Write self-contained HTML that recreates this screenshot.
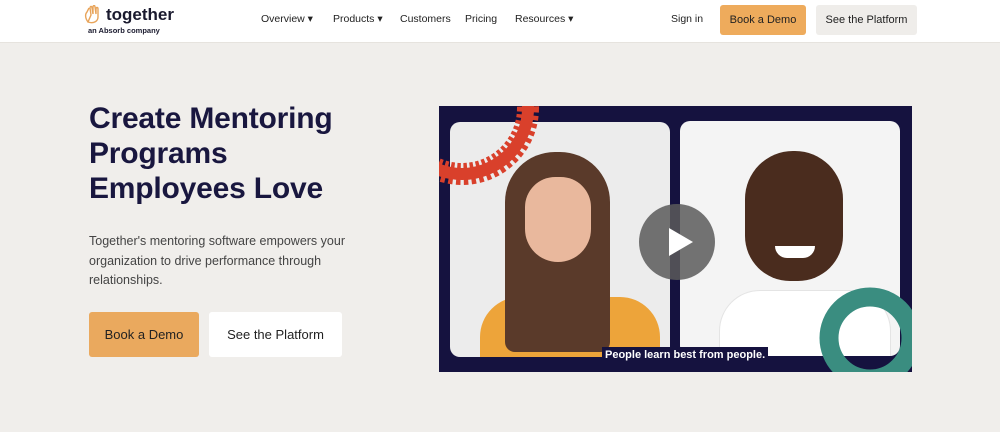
<!DOCTYPE html>
<html><head><style>
*{margin:0;padding:0;box-sizing:border-box}
body{width:1000px;height:440px;overflow:hidden;background:#f0eeeb;font-family:"Liberation Sans",sans-serif;color:#1b1a3d;position:relative}
.hdr{position:absolute;left:0;top:0;width:1000px;height:43px;background:#fff;border-bottom:1px solid #e6e3de}
.nav{position:absolute;top:13px;font-size:10.5px;color:#222}
.btn{position:absolute;font-size:11px;display:flex;align-items:center;justify-content:center;border-radius:3px}
h1{position:absolute;left:89px;top:101px;font-size:30px;line-height:35px;font-weight:bold;color:#19173f;letter-spacing:-0.2px}
p{position:absolute;left:89px;top:232px;font-size:12.5px;line-height:19.5px;color:#444;width:290px}
.v{position:absolute;left:439px;top:106px;width:473px;height:266px;background:#15123f;overflow:hidden}
</style></head><body>
<div class="hdr">
<svg style="position:absolute;left:83px;top:5px" width="20" height="20" viewBox="0 0 20 20"><path d="M5 17 C2 13 2 9 4 7 L6 3 M8 10 L7 3 C7 1 9 1 9 3 L10 9 L10 2 C10 0 12 0 12 2 L13 9 L13 4 C13 2 15 2 15 4 L15 12 C15 16 11 19 5 17Z" fill="none" stroke="#e8a45a" stroke-width="1.4"/></svg>
<div style="position:absolute;left:106px;top:5px;font-size:17px;font-weight:bold;color:#1a1a2e">together</div>
<div style="position:absolute;left:88px;top:26px;font-size:7.5px;font-weight:bold;color:#1a1a2e">an Absorb company</div>
<div class="nav" style="left:261px">Overview ▾</div>
<div class="nav" style="left:333px">Products ▾</div>
<div class="nav" style="left:400px">Customers</div>
<div class="nav" style="left:465px">Pricing</div>
<div class="nav" style="left:515px">Resources ▾</div>
<div class="nav" style="left:671px">Sign in</div>
<div class="btn" style="left:720px;top:5px;width:86px;height:30px;background:#eeab5c;color:#222">Book a Demo</div>
<div class="btn" style="left:816px;top:5px;width:101px;height:30px;background:#efedea;color:#222">See the Platform</div>
</div>
<h1>Create Mentoring<br>Programs<br>Employees Love</h1>
<p>Together's mentoring software empowers your<br>organization to drive performance through<br>relationships.</p>
<div class="btn" style="left:89px;top:312px;width:110px;height:45px;background:#eaa95e;font-size:13px;color:#222">Book a Demo</div>
<div class="btn" style="left:209px;top:312px;width:133px;height:45px;background:#fff;font-size:13px;color:#222">See the Platform</div>
<div class="v">
<div style="position:absolute;left:11px;top:16px;width:220px;height:235px;background:#ececec;border-radius:10px;overflow:hidden">
 <div style="position:absolute;left:30px;top:175px;width:180px;height:80px;background:#eda43a;border-radius:40px 40px 0 0"></div>
 <div style="position:absolute;left:55px;top:30px;width:105px;height:200px;background:#5a3a2a;border-radius:50px 50px 10px 10px"></div>
 <div style="position:absolute;left:75px;top:55px;width:66px;height:85px;background:#e9b89d;border-radius:33px 33px 36px 36px"></div>
</div>
<div style="position:absolute;left:241px;top:15px;width:220px;height:235px;background:#f4f4f4;border-radius:10px;overflow:hidden">
 <div style="position:absolute;left:40px;top:170px;width:170px;height:90px;background:#fff;border-radius:40px 40px 0 0;box-shadow:0 0 0 1px #e4e4e4"></div>
 <div style="position:absolute;left:65px;top:30px;width:98px;height:130px;background:#4a2c1e;border-radius:48px 48px 45px 45px"></div>
 <div style="position:absolute;left:95px;top:125px;width:40px;height:12px;background:#fff;border-radius:0 0 20px 20px"></div>
</div>
<svg style="position:absolute;left:-77px;top:-98px" width="200" height="200"><circle cx="100" cy="100" r="66" fill="none" stroke="#d9402b" stroke-width="22" stroke-dasharray="4 3"/><circle cx="100" cy="100" r="66" fill="none" stroke="#d9402b" stroke-width="12"/></svg>
<svg style="position:absolute;left:371px;top:172px" width="120" height="120"><circle cx="60" cy="60" r="41" fill="none" stroke="#3a8d80" stroke-width="19"/></svg>
<div style="position:absolute;left:200px;top:98px;width:76px;height:76px;border-radius:50%;background:rgba(90,90,90,.85)"></div>
<svg style="position:absolute;left:228px;top:120px" width="28" height="32"><path d="M2 2 L26 16 L2 30Z" fill="#fff"/></svg>
<div style="position:absolute;left:163px;top:241px;background:#15123f;color:#fff;font-size:11px;font-weight:bold;padding:2px 3px">People learn best from people.</div>
</div>
<div style="position:absolute;left:0;top:432px;width:1000px;height:8px;background:#fff"></div>
</body></html>
